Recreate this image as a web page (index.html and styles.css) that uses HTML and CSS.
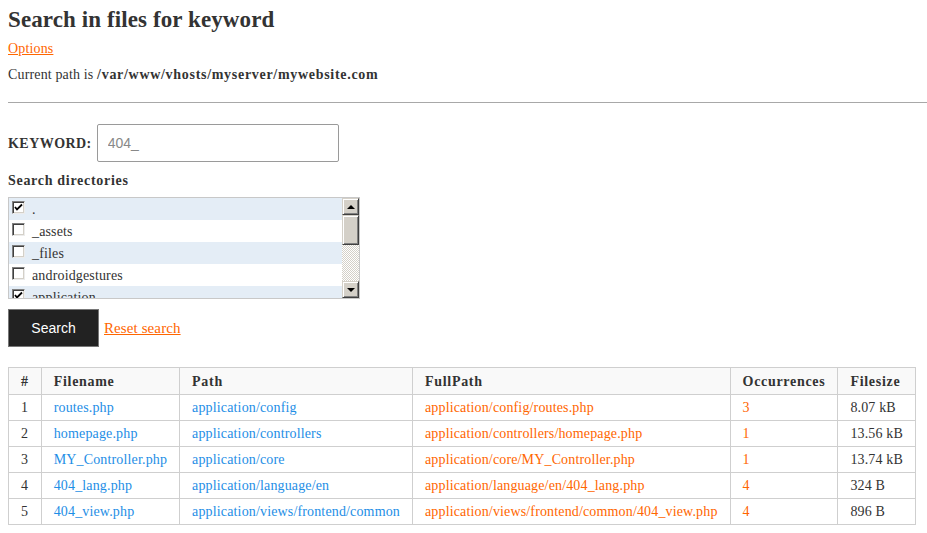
FILE: index.html
```html
<!DOCTYPE html>
<html>
<head>
<meta charset="utf-8">
<title>Search in files for keyword</title>
<link rel="stylesheet" href="styles.css">
</head>
<body>
<div class="page">
  <h1 class="title">Search in files for keyword</h1>
  <div class="options"><a class="link" href="#">Options</a></div>
  <div class="current">Current path is <b>/var/www/vhosts/myserver/mywebsite.com</b></div>
  <div class="rule"></div>

  <form class="search-form" onsubmit="return false">
    <div class="kw-row">
      <label class="kw-label" for="kw">KEYWORD:</label>
      <input class="kw-input" id="kw" type="text" value="404_">
    </div>

    <div class="dirs-label">Search directories</div>

    <div class="listbox">
      <div class="items">
        <div class="item alt"><span class="cb checked"><svg viewBox="0 0 11 11" width="11" height="11"><path d="M2 5 L4 7.5 L9 2.5" fill="none" stroke="#000" stroke-width="1.8"/></svg></span><span class="name">.</span></div>
        <div class="item"><span class="cb"></span><span class="name">_assets</span></div>
        <div class="item alt"><span class="cb"></span><span class="name">_files</span></div>
        <div class="item"><span class="cb"></span><span class="name">androidgestures</span></div>
        <div class="item alt"><span class="cb checked"><svg viewBox="0 0 11 11" width="11" height="11"><path d="M2 5 L4 7.5 L9 2.5" fill="none" stroke="#000" stroke-width="1.8"/></svg></span><span class="name">application</span></div>
      </div>
      <div class="sbar">
        <div class="sbtn"><span class="arrow up"></span></div>
        <div class="thumb"></div>
        <div class="track"></div>
        <div class="sbtn"><span class="arrow down"></span></div>
      </div>
    </div>

    <div class="actions">
      <button class="btn" type="button">Search</button>
      <a class="link reset" href="#">Reset search</a>
    </div>
  </form>

  <table class="results">
    <thead>
      <tr><th>#</th><th>Filename</th><th>Path</th><th>FullPath</th><th>Occurrences</th><th>Filesize</th></tr>
    </thead>
    <tbody>
      <tr><td>1</td><td class="blue">routes.php</td><td class="blue">application/config</td><td class="orange">application/config/routes.php</td><td class="orange">3</td><td>8.07 kB</td></tr>
      <tr><td>2</td><td class="blue">homepage.php</td><td class="blue">application/controllers</td><td class="orange">application/controllers/homepage.php</td><td class="orange">1</td><td>13.56 kB</td></tr>
      <tr><td>3</td><td class="blue">MY_Controller.php</td><td class="blue">application/core</td><td class="orange">application/core/MY_Controller.php</td><td class="orange">1</td><td>13.74 kB</td></tr>
      <tr><td>4</td><td class="blue">404_lang.php</td><td class="blue">application/language/en</td><td class="orange">application/language/en/404_lang.php</td><td class="orange">4</td><td>324 B</td></tr>
      <tr><td>5</td><td class="blue">404_view.php</td><td class="blue">application/views/frontend/common</td><td class="orange">application/views/frontend/common/404_view.php</td><td class="orange">4</td><td>896 B</td></tr>
    </tbody>
  </table>
</div>
</body>
</html>
```

FILE: styles.css
```css
html, body {
  margin: 0;
  padding: 0;
  background: #fff;
}

body {
  font-family: "Liberation Serif", "Times New Roman", serif;
  font-size: 14px;
  line-height: 18px;
  letter-spacing: 0.15px;
  color: #333;
}

b,
.kw-label,
.dirs-label,
.results th {
  font-weight: bold;
  letter-spacing: 0.7px;
}

.page {
  padding: 0 0 8px 8px;
}

.title {
  margin: 8px 0 0;
  font-size: 23px;
  line-height: 24px;
  font-weight: bold;
  letter-spacing: 0.1px;
  color: #333;
}

.options {
  margin-top: 8px;
}

.link {
  color: #ff6600;
  text-decoration: underline;
}

.reset {
  font-size: 15px;
  letter-spacing: 0.1px;
}

.current {
  margin-top: 8px;
}

.rule {
  margin-top: 18px;
  height: 1px;
  background: #a8a8a8;
}

.search-form {
  margin: 0;
}

.kw-row {
  margin-top: 21px;
  display: flex;
  align-items: center;
  gap: 5px;
}

.kw-label {
  padding-top: 2px;
  letter-spacing: 0.45px;
}

.kw-input {
  box-sizing: border-box;
  width: 242px;
  height: 38px;
  margin: 0;
  padding: 0 10px;
  border: 1px solid #9a9a9a;
  border-radius: 2px;
  font-family: "Liberation Sans", Arial, sans-serif;
  font-size: 14px;
  letter-spacing: 0;
  color: #888;
  outline: none;
}

.dirs-label {
  margin-top: 10px;
}

.listbox {
  margin-top: 7px;
  box-sizing: border-box;
  width: 352px;
  height: 102px;
  border: 1px solid #c8c8c8;
  display: flex;
  overflow: hidden;
}

.items {
  flex: 1;
  overflow: hidden;
}

.item {
  display: flex;
  align-items: flex-start;
  height: 22px;
  padding-left: 3px;
}

.item.alt {
  background: #e4edf6;
}

.cb {
  box-sizing: border-box;
  flex: none;
  width: 13px;
  height: 13px;
  margin-top: 3px;
  margin-right: 7px;
  background: #fff;
  border: 1px solid;
  border-color: #808080 #ececec #ececec #808080;
  box-shadow: inset 1px 1px 0 #404040, inset -1px -1px 0 #d4d0c8;
  display: flex;
  align-items: center;
  justify-content: center;
}

.cb svg {
  display: block;
}

.name {
  white-space: nowrap;
  line-height: 24px;
}

.sbar {
  flex: none;
  width: 17px;
  display: flex;
  flex-direction: column;
}

.sbtn,
.thumb {
  box-sizing: border-box;
  background: #d4d0c8;
  border: 1px solid;
  border-color: #d4d0c8 #404040 #404040 #d4d0c8;
  box-shadow: inset 1px 1px 0 #fff, inset -1px -1px 0 #808080;
}

.sbtn {
  height: 17px;
  flex: none;
  display: flex;
  align-items: center;
  justify-content: center;
}

.thumb {
  height: 30px;
  flex: none;
}

.track {
  flex: 1;
  background: repeating-conic-gradient(#d4d0c8 0 25%, #fff 0 50%) 0 0 / 2px 2px;
}

.arrow {
  width: 0;
  height: 0;
  border-left: 4px solid transparent;
  border-right: 4px solid transparent;
}

.arrow.up {
  border-bottom: 4px solid #000;
}

.arrow.down {
  border-top: 4px solid #000;
}

.actions {
  margin-top: 10px;
  display: flex;
  align-items: center;
  gap: 5px;
}

.btn {
  box-sizing: border-box;
  width: 91px;
  height: 38px;
  margin: 0;
  padding: 0;
  background: #222;
  border: 1px solid #777;
  color: #fff;
  font-family: "Liberation Sans", Arial, sans-serif;
  font-size: 14px;
  letter-spacing: 0;
}

.results {
  margin-top: 20px;
  border-collapse: collapse;
  border: 1px solid #cfcfcf;
}

.results th,
.results td {
  border: 1px solid #cfcfcf;
  padding: 3px 12px;
  line-height: 19px;
  text-align: left;
  white-space: nowrap;
}

.results th {
  padding: 4px 12px 3px;
  background: #f9f9f9;
}

.blue {
  color: #1e8ee6;
}

.orange {
  color: #ff6600;
}
```
